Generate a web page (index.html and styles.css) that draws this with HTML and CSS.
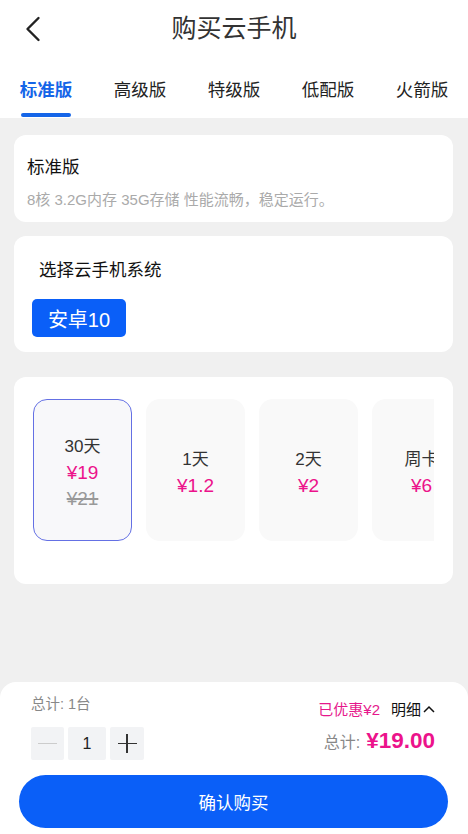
FILE: index.html
```html
<!DOCTYPE html>
<html lang="zh-CN">
<head>
<meta charset="utf-8">
<title>购买云手机</title>
<link rel="stylesheet" href="styles.css">
</head>
<body>
<div class="page">
  <header class="topbar">
    <div class="back">
      <svg width="16" height="26" viewBox="0 0 16 26"><polyline points="13.5,2 2.5,13 13.5,24" fill="none" stroke="#222" stroke-width="2.4" stroke-linecap="round" stroke-linejoin="round"/></svg>
    </div>
    <h1 class="title">购买云手机</h1>
    <div></div>
  </header>
  <nav class="tabs">
    <div class="tab active">标准版<span class="bar"></span></div>
    <div class="tab">高级版</div>
    <div class="tab">特级版</div>
    <div class="tab">低配版</div>
    <div class="tab">火箭版</div>
  </nav>
  <main class="content">
    <section class="card info">
      <div class="info-title">标准版</div>
      <div class="info-desc">8核 3.2G内存 35G存储 性能流畅，稳定运行。</div>
    </section>
    <section class="card system">
      <div class="system-title">选择云手机系统</div>
      <div class="sys-btn">安卓10</div>
    </section>
    <section class="card plans">
      <div class="plan-scroll">
        <div class="plan selected">
          <div class="plan-name">30天</div>
          <div class="plan-price">¥19</div>
          <div class="plan-old">¥21</div>
        </div>
        <div class="plan">
          <div class="plan-name">1天</div>
          <div class="plan-price">¥1.2</div>
        </div>
        <div class="plan">
          <div class="plan-name">2天</div>
          <div class="plan-price">¥2</div>
        </div>
        <div class="plan">
          <div class="plan-name">周卡</div>
          <div class="plan-price">¥6</div>
        </div>
      </div>
    </section>
  </main>
  <footer class="footer">
    <div class="summary">
      <div class="left">
        <div class="count">总计: 1台</div>
        <div class="stepper">
          <div class="step minus"><span class="line"></span></div>
          <div class="step num">1</div>
          <div class="step plus"><span class="line"></span><span class="line v"></span></div>
        </div>
      </div>
      <div class="right">
        <div class="discount"><span class="saved">已优惠¥2</span><span class="detail">明细<svg width="12" height="8" viewBox="0 0 12 8"><polyline points="1,7 6,2 11,7" fill="none" stroke="#111" stroke-width="1.5"/></svg></span></div>
        <div class="total"><span class="total-label">总计:</span><span class="total-value">¥19.00</span></div>
      </div>
    </div>
    <div class="buy">确认购买</div>
  </footer>
</div>
</body>
</html>
```
FILE: styles.css
```css
* { box-sizing: border-box; }
html, body { margin: 0; padding: 0; }
body {
  font-family: "Liberation Sans", "Noto Sans CJK SC", sans-serif;
  background: #f0f0f0;
  color: #111;
}
.page {
  width: 468px;
  height: 834px;
  display: flex;
  flex-direction: column;
  overflow: hidden;
}
.topbar {
  background: #fff;
  height: 56px;
  display: grid;
  grid-template-columns: 1fr auto 1fr;
  align-items: center;
  padding: 0 25px;
}
.back { display: flex; align-items: center; padding-top: 2px; }
.title {
  margin: 0;
  font-size: 25px;
  font-weight: normal;
  color: #333;
  line-height: 30px;
}
.tabs {
  background: #fff;
  height: 62px;
  display: flex;
  gap: 42px;
  padding: 22px 0 0 20px;
}
.tab {
  width: 52px;
  font-size: 17.5px;
  line-height: 24px;
  white-space: nowrap;
  color: #222;
  display: flex;
  flex-direction: column;
  align-items: center;
}
.tab.active { color: #1565e8; font-weight: bold; }
.tab .bar {
  display: block;
  width: 50px;
  height: 4px;
  border-radius: 2px;
  background: #1565e8;
  margin-top: 11px;
}
.content {
  flex: 1;
  padding: 17px 15px 0 14px;
  display: flex;
  flex-direction: column;
}
.card {
  background: #fff;
  border-radius: 12px;
}
.info { padding: 22px 13px 13px 13px; height: 87px; }
.info-title { font-size: 17.5px; line-height: 20px; color: #111; }
.info-desc { font-size: 15px; line-height: 18px; color: #aaa; margin-top: 14px; white-space: nowrap; }
.system { margin-top: 14px; padding: 24px 18px 15px 18px; height: 116px; }
.system-title { font-size: 17.5px; line-height: 20px; padding-left: 7px; color: #111; }
.sys-btn {
  margin-top: 19px;
  width: 94px;
  height: 38px;
  border-radius: 5px;
  background: #0a5ff8;
  color: #fff;
  font-size: 20px;
  display: flex;
  align-items: center;
  justify-content: center;
}
.plans { margin-top: 25px; padding: 22px 19px 43px 19px; height: 207px; }
.plan-scroll {
  display: flex;
  gap: 14px;
  overflow: hidden;
}
.plan {
  flex: 0 0 99px;
  height: 142px;
  border-radius: 14px;
  background: #f9f9f9;
  border: 1px solid transparent;
  padding-top: 5px;
  display: flex;
  flex-direction: column;
  align-items: center;
  justify-content: center;
}
.plan.selected { border-color: #6470e4; background: #f8f8fa; }
.plan-name { font-size: 17px; line-height: 26px; color: #333; }
.plan-price { font-size: 19px; line-height: 26px; color: #ec138b; }
.plan-old { font-size: 19px; line-height: 25px; color: #999; text-decoration: line-through; text-decoration-thickness: 2px; }
.footer {
  background: #fff;
  border-radius: 16px 16px 0 0;
  height: 152px;
  padding: 12px 20px 6px 19px;
}
.summary {
  display: flex;
  justify-content: space-between;
  padding: 0 13px 0 12px;
  height: 66px;
}
.count { font-size: 14.5px; line-height: 20px; color: #888; }
.stepper { display: flex; gap: 4px; margin-top: 13px; }
.step {
  height: 33px;
  background: #f2f3f5;
  border-radius: 2px;
  display: flex;
  align-items: center;
  justify-content: center;
  position: relative;
}
.minus { width: 33px; }
.num { width: 38px; font-size: 16px; color: #222; }
.plus { width: 34px; }
.step .line { display: block; width: 19px; height: 1.5px; background: #ccc; }
.plus .line { background: #333; position: absolute; }
.plus .line.v { width: 1.5px; height: 19px; }
.right { display: flex; flex-direction: column; align-items: flex-end; }
.discount { margin-top: 6px; font-size: 15px; line-height: 20px; display: flex; align-items: center; }
.saved { color: #e6178c; }
.detail { margin-left: 11px; color: #111; display: flex; align-items: center; gap: 2px; }
.detail svg { margin-top: -2px; }
.total { margin-top: 6px; line-height: 30px; display: flex; align-items: baseline; }
.total-label { font-size: 16px; color: #888; margin-right: 6px; }
.total-value { font-size: 22.5px; font-weight: bold; color: #ec138b; }
.buy {
  margin-top: 15px;
  height: 53px;
  border-radius: 27px;
  background: #0a5ff8;
  color: #fff;
  font-size: 17.5px;
  display: flex;
  align-items: center;
  justify-content: center;
}
```
